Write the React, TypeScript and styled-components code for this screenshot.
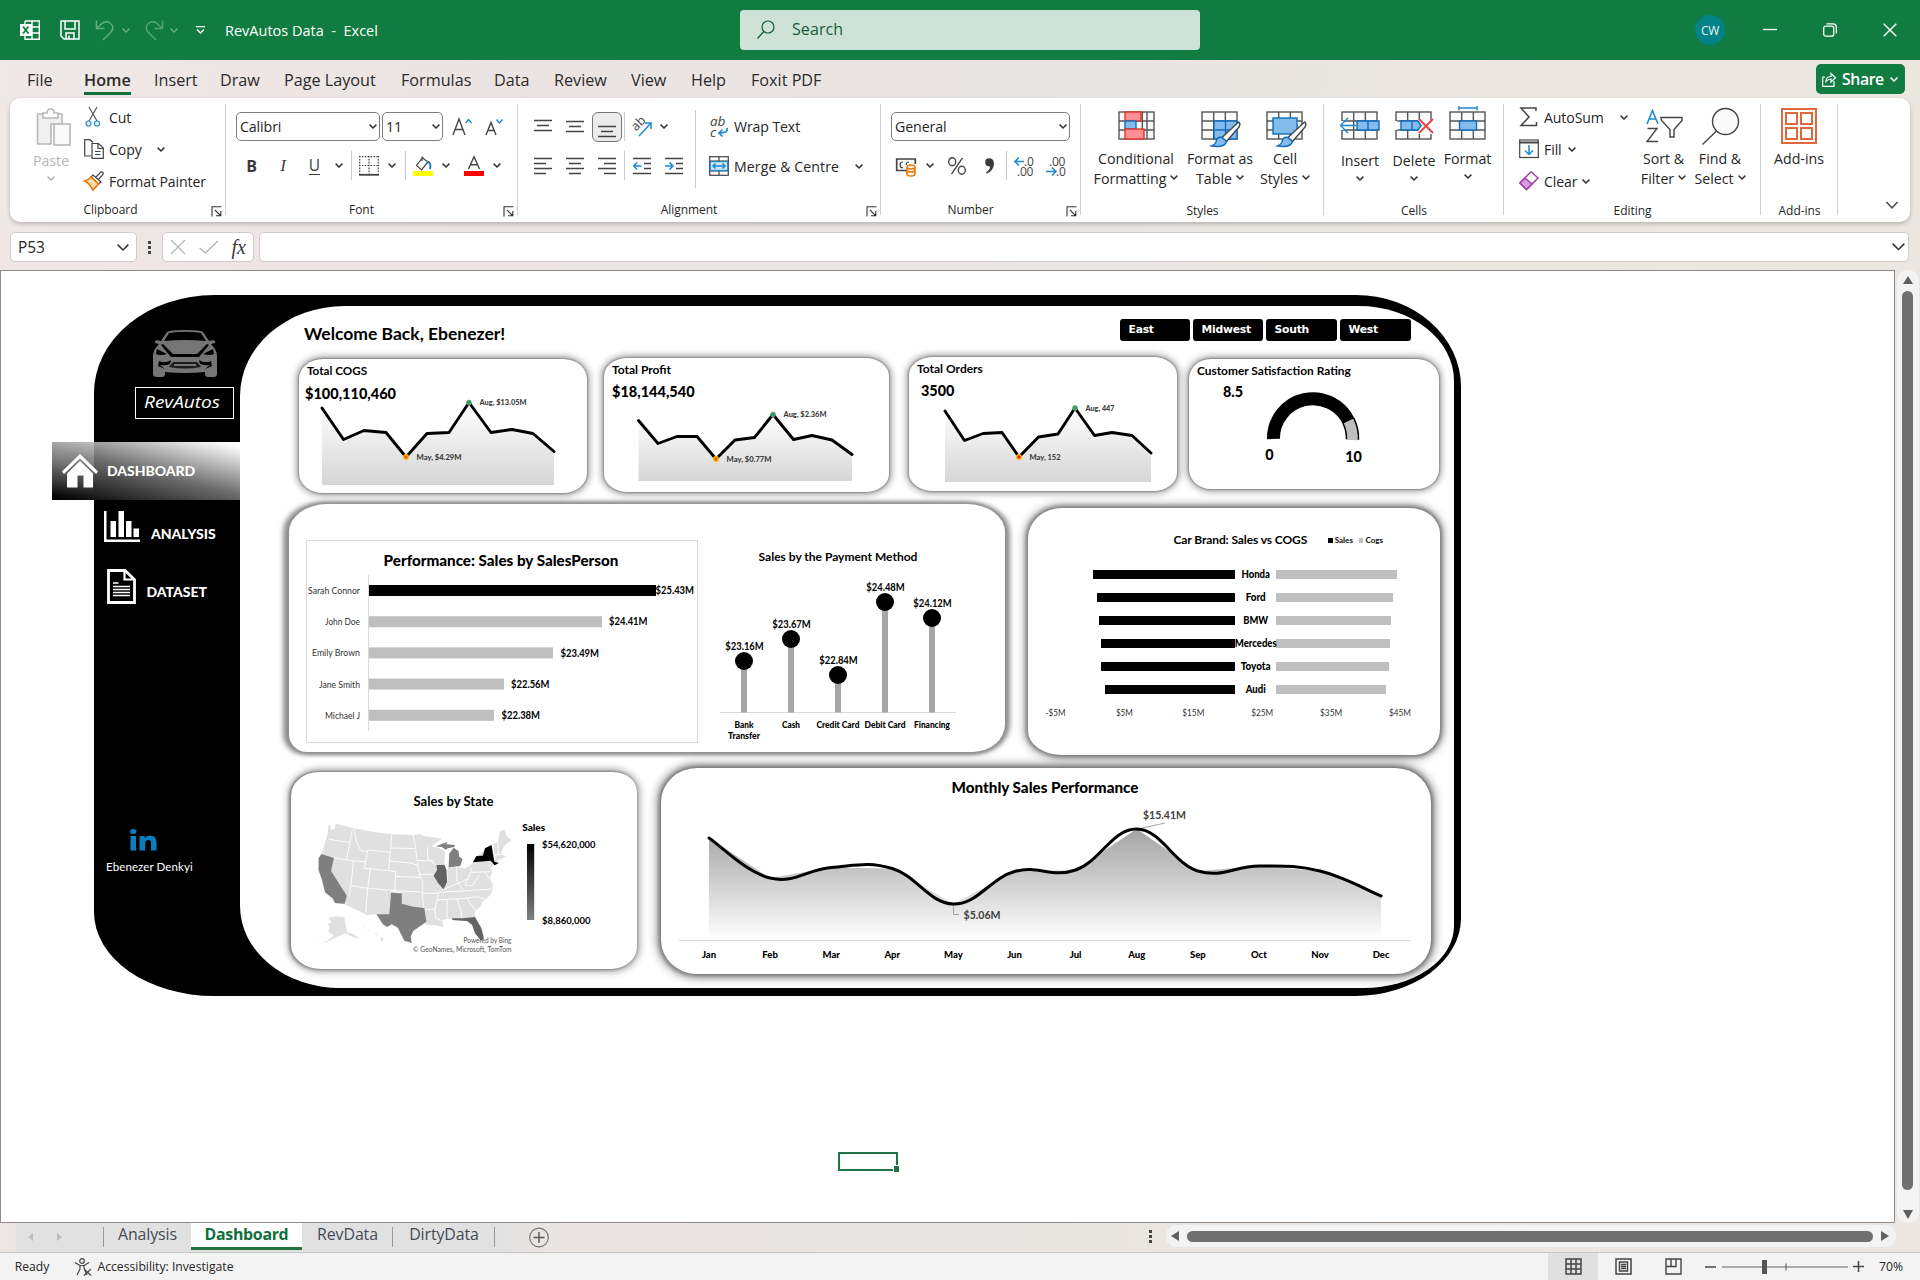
import React from 'react';
import styled, { createGlobalStyle } from 'styled-components';

const UI = `"Open Sans", "Noto Sans", sans-serif`;
const CAL = `Lato, "Open Sans", sans-serif`;

const Global = createGlobalStyle`
  * { box-sizing: border-box; }
  html, body { margin: 0; padding: 0; }
  body { width: 1920px; height: 1280px; overflow: hidden; background: #ebe6e2; font-family: ${UI}; color: #262626; }
  svg { display: block; overflow: visible; flex: none; }
`;

/* ---------- shell ---------- */
const Shell = styled.div`
  width: 1920px; height: 1280px; display: flex; flex-direction: column; overflow: hidden;
  background: linear-gradient(100deg, #efe8e6 0%, #ebe4e2 25%, #e9e5e3 50%, #ece7e0 80%, #ebe6e1 100%);
`;
const TitleBar = styled.header`
  height: 60px; background: #107c41; color: #fff; display: flex; align-items: center; flex: none;
`;
const Slot = styled.div<{ $w: number; $pl?: number }>`
  width: ${p => p.$w}px; flex: none; display: flex; align-items: center; justify-content: center; padding-left: ${p => p.$pl ?? 0}px;
`;
const DocName = styled.div`
  width: 517px; flex: none; padding-left: 2px; font-size: 14.5px; white-space: pre;
`;
const SearchBox = styled.div`
  width: 460px; flex: none; height: 40px; background: #cfe2d8; border-radius: 4px; display: flex; align-items: center;
  padding-left: 17px; gap: 17px; color: #185c37; font-size: 16px; letter-spacing: 0.1px; padding-bottom: 2px;
`;
const Avatar = styled.div`
  width: 30px; flex: none; height: 30px; border-radius: 50%; background: #038387; font-size: 12px; letter-spacing: -0.4px;
  display: flex; align-items: center; justify-content: center; margin: 0 8px 0 495px; color: #e8f6f6;
`;
const MenuBar = styled.nav`
  height: 38px; display: flex; flex: none; padding-left: 27px; align-items: flex-start; font-size: 16.2px; color: #2b2b2b;
`;
const MenuItem = styled.div<{ $w: number; $on?: boolean }>`
  width: ${p => p.$w}px; flex: none; height: 36px; line-height: 40px; white-space: nowrap;
  font-weight: ${p => (p.$on ? 600 : 400)};
  span { display: inline-block; height: 35px; border-bottom: ${p => (p.$on ? '3px solid #0f703b' : '0')}; }
`;
const ShareButton = styled.div`
  width: 89px; height: 30px; margin: 4px 15px 0 auto; border-radius: 5px; background: #107c41; color: #fff;
  display: flex; align-items: center; font-size: 15.8px; font-weight: 600; letter-spacing: -0.4px; padding: 0 5px 0 6px; gap: 6px;
`;
const Ribbon = styled.section`
  height: 124px; margin: 0 10px; border-radius: 10px; background: #fff; display: flex; flex: none;
  box-shadow: 0 2px 4px rgba(0,0,0,.22);
`;
const Group = styled.div<{ $w: number }>`
  width: ${p => p.$w}px; flex: none; display: flex; flex-direction: column;
  background: linear-gradient(#d1d1d1, #d1d1d1) no-repeat right 6px / 1px 111px;
`;
const GroupBody = styled.div<{ $pl?: number }>`
  height: 102px; display: flex; padding-left: ${p => p.$pl ?? 0}px;
`;
const GroupFoot = styled.div<{ $dy?: number; $pr?: number }>`
  height: 19px; display: flex; align-items: center; justify-content: center; font-size: 12px; letter-spacing: -0.05px;
  color: #262626; padding-top: ${p => p.$dy ?? 0}px;
  & > span { flex: 1; text-align: center; padding-right: ${p => p.$pr ?? 0}px; }
  & > svg { margin: 0 4px 0 -3px; position: relative; top: 2px; }
`;
const Stack = styled.div<{ $w?: number; $pt: number; $ml?: number; $gap?: number }>`
  ${p => (p.$w ? `width:${p.$w}px;` : '')} flex: none; display: flex; flex-direction: column; padding-top: ${p => p.$pt}px;
  margin-left: ${p => p.$ml ?? 0}px; gap: ${p => p.$gap ?? 0}px;
`;
const Tools = styled.div`
  height: 29px; display: flex; align-items: center;
`;
const Command = styled.div<{ $h?: number; $gap?: number }>`
  height: ${p => p.$h ?? 32}px; display: flex; align-items: center; font-size: 14.1px; white-space: nowrap; letter-spacing: -0.1px;
  & > i { width: 27px; display: flex; padding-left: 2px; }
  & > svg { margin-left: ${p => p.$gap ?? 9}px; }
`;
const BigCommand = styled.div<{ $w: number; $dim?: boolean; $low?: boolean }>`
  width: ${p => p.$w}px; flex: none; display: flex; flex-direction: column; align-items: center; padding-top: 8px;
  font-size: 14.2px; line-height: 20px; text-align: center; white-space: nowrap; color: ${p => (p.$dim ? '#b5b5b5' : '#262626')};
  & > svg { margin-bottom: ${p => (p.$low ? 2 : 0)}px; }
  & > div + svg { margin-top: 5px; }
  & > div { display: flex; align-items: center; justify-content: center; gap: 4px; height: 20px; }
  & > div > svg { margin-bottom: 4px; }
`;
const Combo = styled.div<{ $w: number }>`
  width: ${p => p.$w}px; height: 29px; border: 1px solid #7d7d7d; border-radius: 5px; display: flex; align-items: center;
  justify-content: space-between; padding: 0 2px 0 3px; font-size: 14.2px; margin-right: 2px; letter-spacing: -0.1px;
`;
const Pressed = styled.div`
  width: 30px; height: 30px; border: 1px solid #767676; border-radius: 6px; background: #ebebeb; margin-left: 1px;
  display: flex; align-items: center; justify-content: center; padding-top: 10px;
`;
const Rule = styled.div<{ $h: number }>`
  width: 1px; height: ${p => p.$h}px; background: #c8c8c8;
`;
const Glyph = styled.span<{ $s?: number; $b?: boolean; $f?: string; $i?: boolean; $u?: boolean }>`
  font-size: ${p => p.$s ?? 17}px; font-weight: ${p => (p.$b ? 700 : 400)}; font-family: ${p => p.$f ?? UI};
  font-style: ${p => (p.$i ? 'italic' : 'normal')}; line-height: 20px; color: #3b3b3b;
  ${p => (p.$u ? 'border-bottom: 1px solid #3b3b3b; line-height: 17px;' : '')}
`;
const FormulaRow = styled.div`
  height: 48px; flex: none; display: flex; padding: 10px 11px 8px 10px;
`;
const Field = styled.div<{ $w: number; $mr?: number; $pr?: number }>`
  width: ${p => p.$w}px; height: 30px; background: #fff; border: 1px solid #cfcccb; border-radius: 5px; margin-right: ${p => p.$mr ?? 0}px;
  display: flex; align-items: center; justify-content: space-between; padding: 0 ${p => p.$pr ?? 7}px 0 7px; font-size: 15.4px;
`;
const Dots = styled.div<{ $mt?: number }>`
  width: 3px; display: flex; flex-direction: column; gap: 2px; margin-top: ${p => p.$mt ?? 0}px;
  i { width: 3px; height: 3px; background: #444; }
`;

/* ---------- worksheet ---------- */
const Work = styled.div`
  height: 953px; flex: none; display: flex;
`;
const Sheet = styled.main`
  width: 1894.5px; border: 1px solid #8f8b89; background: #fff; position: relative; padding: 24px 0 0 93px;
`;
const VScroll = styled.div`
  width: 22px; margin-left: 2px; background: #f3f3f3; border-radius: 10px; display: flex; flex-direction: column; align-items: center;
  padding-top: 6px;
`;
const Thumb = styled.div`
  width: 11px; height: 899px; border-radius: 6px; background: #707070; margin: 7px 0 20px;
`;
const Selection = styled.div`
  position: absolute; left: 837px; top: 881px; width: 60px; height: 19px; border: 2px solid #217346;
  &::after { content: ''; position: absolute; right: -3px; bottom: -3px; width: 5px; height: 6px; background: #217346; border: solid #fff; border-width: 1px 0 0 1px; }
`;
const Board = styled.div`
  width: 1367px; height: 701px; background: #000; display: flex;
  border-radius: 120px 105px 106px 120px / 98px 92px 78px 84px;
`;
const Side = styled.aside`
  width: 146px; display: flex; flex-direction: column; color: #fff; font-family: ${CAL};
`;
const LogoBox = styled.div`
  width: 99px; height: 32px; border: 1.4px solid #fff; margin: 10px 0 23px 41px; display: flex; align-items: center; padding-left: 8px;
`;
const NavItem = styled.div<{ $h: number; $pl: number; $gap: number; $on?: boolean; $dy: number }>`
  height: ${p => p.$h}px; display: flex; align-items: center; padding-left: ${p => p.$pl}px; gap: ${p => p.$gap}px;
  font-size: 14px; font-weight: 900; white-space: nowrap; letter-spacing: -0.05px;
  ${p => p.$on && `margin-left: -42px; background: linear-gradient(to bottom, rgba(255,255,255,.32), transparent 92%) no-repeat 0 0 / 42px 100%, linear-gradient(14deg, #000 2%, #6e6e6e 50%, #fff 96%);`}
  span { position: relative; top: ${p => p.$dy}px; }
`;
const Owner = styled.div`
  margin-top: auto; padding: 0 0 119px 12px; font-size: 11.5px; line-height: 20px; white-space: nowrap; letter-spacing: .1px;
  svg { margin: 0 0 6px 24px; }
`;
const Content = styled.div`
  width: 1214px; height: 682px; margin-top: 11px; background: #fff; display: flex; flex-direction: column; font-family: ${CAL}; color: #000;
  border-radius: 105px 95px 90px 100px / 90px 75px 62px 82px;
`;
const TopLine = styled.div`
  height: 51px; display: flex; padding: 13px 43px 0 64px; justify-content: space-between; flex: none;
`;
const Welcome = styled.h1`
  margin: 5px 0 0; font-size: 17.5px; line-height: 20px; font-weight: 700;
`;
const Slicers = styled.div`
  display: flex; gap: 3px;
`;
const Slicer = styled.div<{ $w: number }>`
  width: ${p => p.$w}px; height: 22px; background: #000; border-radius: 3px; color: #fff; font: 700 10.8px/21px "DejaVu Sans", sans-serif;
  letter-spacing: -0.25px; padding-left: 8.5px;
`;
const CardRow = styled.div<{ $h: number; $pl: number }>`
  height: ${p => p.$h}px; display: flex; flex: none; padding-left: ${p => p.$pl}px; align-items: flex-start;
`;
const Card = styled.section<{ $w: number; $h: number; $ml?: number; $mt?: number; $r: string; $deep?: string }>`
  width: ${p => p.$w}px; height: ${p => p.$h}px; margin: ${p => p.$mt ?? 0}px 0 0 ${p => p.$ml ?? 0}px; flex: none; background: #fff;
  border-radius: ${p => p.$r}; display: flex; flex-direction: column;
  box-shadow: ${p => p.$deep ?? '0 0 2px 1px rgba(0,0,0,.28), 0 0 6px 3px rgba(0,0,0,.33)'};
`;
const Line = styled.div<{ $h: number; $pl?: number; $s: number; $ls?: number; $c?: boolean; $pr?: number; $w?: number; $pt?: number }>`
  height: ${p => p.$h}px; line-height: ${p => p.$h - (p.$pt ?? 0)}px; padding: ${p => p.$pt ?? 0}px ${p => p.$pr ?? 0}px 0 ${p => p.$pl ?? 0}px; font-size: ${p => p.$s}px;
  font-weight: ${p => p.$w ?? 700}; letter-spacing: ${p => p.$ls ?? 0}px; white-space: nowrap; text-align: ${p => (p.$c ? 'center' : 'left')}; flex: none;
`;
const Split = styled.div`
  display: flex;
`;
const PerfBox = styled.div`
  width: 392px; height: 203px; margin: 36px 0 0 17px; border: 1px solid #d9d9d9;
`;
const PayBox = styled.div`
  width: 280px; margin-top: 36px;
`;
const Legend = styled.div`
  display: flex; align-items: center; font-size: 8px; font-weight: 900; margin-left: 21px; gap: 2px; color: #222;
  i { width: 4.5px; height: 5px; background: #000; }
  i + span + i { background: #bfbfbf; margin-left: 4px; }
`;

/* ---------- bottom ---------- */
const TabBar = styled.div`
  height: 29px; display: flex; flex: none;
`;
const TabStrip = styled.div`
  width: 545px; height: 29px; margin-left: 16px; display: flex; background: linear-gradient(90deg, #e2e1e1 0 480px, #ebe6e4 545px);
`;
const Tab = styled.div<{ $w: number; $on?: boolean; $bar?: boolean }>`
  width: ${p => p.$w}px; height: 27px; font-size: 15.9px; line-height: 22px; text-align: center; color: ${p => (p.$on ? '#0f703b' : '#444b55')};
  font-weight: ${p => (p.$on ? 700 : 400)}; letter-spacing: ${p => (p.$on ? -0.3 : -0.1)}px; flex: none;
  ${p => (p.$on ? 'background:#fff; border-bottom: 3px solid #217346;' : '')}
  ${p => (p.$bar ? 'background: linear-gradient(#999,#999) no-repeat right 4px / 1px 20px;' : '')}
`;
const HScroll = styled.div`
  width: 731px; height: 22px; margin: 2px 24px 0 14px; background: #f3f3f3; border-radius: 10px; display: flex; align-items: center; justify-content: space-between; padding: 0 7px 0 5px;
  i { width: 686px; height: 11px; border-radius: 6px; background: #707070; }
`;
const Status = styled.footer`
  height: 28px; background: #f3f3f3; border-top: 1px solid #c9c5c3; display: flex; align-items: center; font-size: 12.2px; flex: none; padding-left: 14px;
`;
const ViewBtn = styled.div<{ $on?: boolean; $w: number }>`
  width: ${p => p.$w}px; height: 27px; display: flex; align-items: center; justify-content: center; background: ${p => (p.$on ? '#e0e0e0' : 'transparent')};
`;

/* ---------- icons ---------- */
const Chev = ({ w = 8, c = '#333', s = 1.5 }: { w?: number; c?: string; s?: number }) => (
  <svg width={w} height={w / 2 + 1} viewBox={`0 0 ${w} ${w / 2 + 1}`}>
    <path d={`M.6 .6 L${w / 2} ${w / 2} L${w - 0.6} .6`} fill="none" stroke={c} strokeWidth={s} />
  </svg>
);
const Launcher = () => (
  <svg width="11" height="11" viewBox="0 0 11 11" fill="none" stroke="#333" strokeWidth="1.1">
    <path d="M1 10.500V.8H10.500M3.800 3.800L9.500 9.500M9.800 5V9.800H5" />
  </svg>
);
type IcoProps = { w?: number; h?: number; c?: string; sw?: number; children: React.ReactNode };
const Ico = ({ w = 20, h = 20, c = '#444', sw = 1.2, children }: IcoProps) => (
  <svg width={w} height={h} viewBox={`0 0 ${w} ${h}`} fill="none" stroke={c} strokeWidth={sw}>{children}</svg>
);
const B = '#1e88d2';
const Grid3 = ({ x = 4, y = 6, w = 36, h = 28 }) => (
  <>
    <rect x={x} y={y} width={w} height={h} fill="#fafafa" />
    <path d={`M${x} ${y + h / 3}h${w}M${x} ${y + (2 * h) / 3}h${w}M${x + w / 3} ${y}v${h}M${x + (2 * w) / 3} ${y}v${h}`} />
  </>
);
const Brush = ({ x }: { x: number }) => (
  <g transform={`translate(${x} 0)`}>
    <path d="M40.500 16Q43 17 41 21L28.500 35.500L24 31.500Z" fill="#fff" stroke="#444" />
    <path d="M24 31.500L28.500 35.500Q27 42 13.500 40Q18 38 18.500 34Q20 30.500 24 31.500Z" fill="#83bbec" stroke="#0f6cbd" />
  </g>
);
const PasteIcon = () => (
  <Ico w={44} h={43} c="#b8b8b8" sw={1.6}>
    <path d="M10 8H33V18H22V38H8.500V8Z" fill="#f0f0f0" />
    <path d="M14 12V7H18Q18 3 21.500 3T25 7H29V12Z" fill="#fff" />
    <rect x="25" y="18" width="16" height="21" fill="#fafafa" />
  </Ico>
);
const House = () => (
  <svg width="36" height="34" viewBox="0 0 36 34" fill="#fff">
    <path d="M0 17.500L18 0L36 17.500L34 20L18 4.500L2 20Z" />
    <path d="M18 7L31 19.500V33.500H21.500V21.500H15.500V33.500H5V19.500Z" />
  </svg>
);
const BarsIcon = () => (
  <svg width="36" height="31" viewBox="0 0 36 31" fill="#fff">
    <path d="M0 0H2.500V28.500H36V31H0ZM6.500 10H12V26H6.500ZM14.500 0H20V26H14.500ZM22 10H27.500V26H22ZM29.500 17.500H35V26H29.500Z" />
  </svg>
);
const DocIcon = () => (
  <svg width="29" height="35" viewBox="0 0 29 35" fill="none" stroke="#fff">
    <path d="M1.500 1.500H18L27.500 10.500V33.500H1.500Z" strokeWidth="2.800" />
    <path d="M17.500 2V10.500H27" strokeWidth="2.200" />
    <path d="M6 14H11.500M6 17.600H23M6 20.600H23M6 23.600H23M6 26.600H23" strokeWidth="1.500" />
  </svg>
);
const Car = () => (
  <svg width="64" height="47" viewBox="0 0 64 47">
    <path fill="#757575" d="M14 2Q16 0 32 0T50 2L56 11Q63 9 62 13L58 14Q64 20 64 26V44Q64 47 60 47H55Q52 47 52 44V42Q32 44 12 42V44Q12 47 9 47H4Q0 47 0 44V26Q0 20 6 14L2 13Q1 9 8 11Z" />
    <g fill="#000">
      <path d="M16 3Q32 .5 48 3L53 11Q32 9 11 11Z" />
      <path d="M10 14L20 24H44L54 14L56 15L46 27H18L8 15Z" />
      <path d="M4 19L14 24Q7 26 3 24ZM60 19L50 24Q57 26 61 24Z" />
      <path d="M6 31Q12 34 18 30L17 34Q12 36 7 35L12 39L5 36ZM58 31Q52 34 46 30L47 34Q52 36 57 35L52 39L59 36Z" />
      <path d="M20 32H44L48 37Q32 40 16 37Z" opacity=".75" />
    </g>
    <path d="M21 35H43" stroke="#757575" strokeWidth="2" />
  </svg>
);

/* ---------- charts ---------- */
type TxProps = { x: number; y: number; w?: number; s: number; a?: 'start' | 'middle' | 'end'; b?: number; c?: string; children: string };
const Tx = ({ x, y, w, s, a = 'middle', b = 700, c = '#000', children }: TxProps) => (
  <text x={x} y={y + s * 0.33} fontSize={s} textAnchor={a} fontWeight={b} fill={c} fontFamily={CAL}
    textLength={w} lengthAdjust="spacingAndGlyphs">{children}</text>
);
type SparkProps = { id: string; box: string; w: number; h: number; pts: number[][]; base: number; hi: string; lo: string; hw: number; lw: number; red?: string };
const Spark = ({ id, box, w, h, pts, base, hi, lo, hw, lw, red = '#d9602a' }: SparkProps) => {
  const d = pts.map(p => p.join(' ')).join('L');
  const [m, a] = [pts[4], pts[7]];
  return (
    <svg width={w} height={h} viewBox={box}>
      <defs><linearGradient id={id} x1="0" y1="0" x2="0" y2="1"><stop offset="0" stopColor="#fff" /><stop offset="1" stopColor="#d6d6d6" /></linearGradient></defs>
      <path d={`M${d}V${base}H${pts[0][0]}Z`} fill={`url(#${id})`} />
      <path d={`M${d}`} fill="none" stroke="#000" strokeWidth="2.900" strokeLinecap="round" strokeLinejoin="round" />
      <circle cx={m[0]} cy={m[1]} r="2.400" fill={red} stroke="#ffc000" strokeWidth="1.300" />
      <circle cx={a[0]} cy={a[1]} r="2.500" fill="#1fa85a" stroke="#8b9a90" strokeWidth=".7" />
      <Tx x={a[0] + 10.500} y={a[1] + 0.3} w={hw} s={7.8} a="start" b={900} c="#404040">{hi}</Tx>
      <Tx x={m[0] + 10.500} y={m[1] + 0.8} w={lw} s={7.8} a="start" b={900} c="#404040">{lo}</Tx>
    </svg>
  );
};
const people: [string, number, string, number, number][] = [
  ['Sarah Connor', 656, '$25.43M', 655.500, 52], ['John Doe', 602, '$24.41M', 609, 35], ['Emily Brown', 553, '$23.49M', 560.500, 48],
  ['Jane Smith', 504, '$22.56M', 511, 41], ['Michael J', 494, '$22.38M', 501.500, 35],
];
const pays: [string, number, string, number][] = [
  ['Bank', 661, '$23.16M', 19], ['Cash', 639, '$23.67M', 18], ['Credit Card', 675, '$22.84M', 43], ['Debit Card', 602, '$24.48M', 41], ['Financing', 618, '$24.12M', 36],
];
const brands: [string, number, number, number][] = [
  ['Honda', 1093, 1397, 28.500], ['Ford', 1097, 1393, 20], ['BMW', 1099, 1391, 25], ['Mercedes', 1101, 1390, 42], ['Toyota', 1101, 1389, 30], ['Audi', 1105, 1386, 20],
];
const months = ['Jan', 'Feb', 'Mar', 'Apr', 'May', 'Jun', 'Jul', 'Aug', 'Sep', 'Oct', 'Nov', 'Dec'];
const monthY = [838, 878, 867.500, 868.500, 904, 871.500, 870, 829, 871, 866, 871, 896];
const mx = (i: number) => 709 + i * 61.1;
const smooth = () => {
  const P = monthY.map((y, i) => [mx(i), y]);
  let d = `M${P[0]}`;
  for (let i = 0; i < P.length - 1; i++) {
    const a = P[i - 1] || P[i], b = P[i], c = P[i + 1], e = P[i + 2] || c, k = 5;
    d += `C${b[0] + (c[0] - a[0]) / k} ${b[1] + (c[1] - a[1]) / k} ${c[0] - (e[0] - b[0]) / k} ${c[1] - (e[1] - b[1]) / k} ${c[0]} ${c[1]}`;
  }
  return d;
};
const Monthly = () => (
  <svg width="770" height="160" viewBox="661 803 770 160">
    <defs><linearGradient id="mg" x1="0" y1="0" x2="0" y2="1"><stop offset="0" stopColor="#a3a3a3" /><stop offset="1" stopColor="#fff" /></linearGradient></defs>
    <path d={`M${monthY.map((y, i) => `${mx(i)} ${y}`).join('L')}V940H709Z`} fill="url(#mg)" />
    <path d="M679 940.500H1411" stroke="#d9d9d9" />
    <path d="M1138 829L1165 823M953.500 904V914.500H959" stroke="#a6a6a6" fill="none" />
    <path d={smooth()} fill="none" stroke="#000" strokeWidth="3" strokeLinecap="round" />
    <Tx x={1164.500} y={815} w={43} s={11.200} c="#404040">$15.41M</Tx>
    <Tx x={982} y={915} w={37} s={11.200} c="#404040">$5.06M</Tx>
    {months.map((m, i) => <Tx key={m} x={mx(i)} y={954.500} s={9.500} b={900}>{m}</Tx>)}
  </svg>
);
const MapChart = () => (
  <svg width="346" height="155" viewBox="291 813 346 155">
    <defs><linearGradient id="sc" x1="0" y1="0" x2="0" y2="1"><stop offset="0" stopColor="#000" /><stop offset="1" stopColor="#808080" /></linearGradient></defs>
    <g transform="translate(90 755) scale(.35714 .33333)">
      <path fill="#e0e0e0" d="M668 209L674 214 676 226 687 220 687 206 740 220 790 230 845 238 905 240 926 237 932 242 986 251 966 266 956 274 975 278 988 284 994 292 992 330 998 345 1003 337 1030 335 1048 341 1062 334 1075 322 1084 304 1124 270 1128 267 1142 262 1148 228 1160 224 1168 245 1181 256 1160 272 1152 290 1154 300 1166 304 1150 312 1133 322 1122 340 1127 352 1120 366 1126 385 1128 402 1126 412 1112 430 1098 440 1095 452 1078 470 1078 488 1045 490 1013 490 998 492 986 497 990 517 968 510 942 509 936 500 860 500 802 478 775 480 765 474 712 448 686 444 658 412 640 345 642 310 650 290 665 240Z" />
      <path fill="#e0e0e0" d="M668 489L690 484 712 486 720 532 738 537 752 549 742 550 715 535 690 547 662 562 635 568 660 560 682 543 667 528 672 516 665 508 676 503Z M764 516L770 520 764 520ZM778 524L786 527 780 529ZM796 534L806 538 800 540ZM812 545L824 552 816 560Z" />
      <path fill="none" stroke="#fff" strokeWidth="2.600" d="M668 252L690 257 728 262M648 297L683 308 738 318 770 320M735 222L728 262 718 313M740 222L746 260 758 287 778 290M842 292L778 285 768 340 836 347 845 238M842 279L910 281M905 240L912 281 916 316 920 345 925 367M840 318L898 324 916 330M738 318L730 392 725 425M785 342L778 398 772 475M730 392L780 400 853 407M836 347L856 350 853 407 930 411 934 459M856 364L925 367M916 316L962 318M920 358L962 358M925 367L932 380 932 415 976 415M937 463L966 463M968 330L946 310 945 276M976 415L966 463 968 490 985 497M976 434L972 434M1000 432L1000 490M1028 432L1040 470 1040 488M976 412L1045 408 1126 402M972 435L1050 430 1085 425 1110 435M1055 430L1080 467M1000 337L1000 378 988 404 1030 385 1058 372 1067 350 1067 335M1026 335L1028 380 1045 405M1068 352L1120 350M1058 372L1050 390 1070 392 1090 362M1126 322L1118 335M1128 270L1134 315M1142 262L1144 300M1134 300L1154 298M843 410L873 413M1105 352L1124 378" />
      <path fill="#7f7f7f" d="M648 297L683 308 675 348 719 422 713 446 686 444 680 430 658 412 650 375 640 345 640 310ZM843 413L873 415 873 446 905 455 936 459 942 500 905 528 898 545 901 564 880 557 862 518 845 508 832 516 820 508 802 478 838 478ZM968 274L1000 261 998 268 1022 270 1020 276 1002 280 996 284 985 276ZM1018 278L1032 288 1034 305 1043 312 1037 333 1004 337 1006 296Z" />
      <path fill="#636363" d="M970 330L993 330 998 345 1000 380 990 403 975 385 962 362 972 345ZM1013 490L1045 490 1078 486 1096 520 1103 550 1095 557 1078 535 1070 510 1056 498 1040 497 1015 495Z" />
      <path fill="#000" d="M1072 322L1082 303 1100 302 1106 280 1124 270 1132 320 1145 324 1133 331 1122 317Z" />
    </g>
    <Tx x={533.700} y={827.500} w={23} s={9.500} b={900}>Sales</Tx>
    <rect x="527" y="844" width="7.200" height="76" fill="url(#sc)" />
    <Tx x={542} y={844.500} w={53.500} s={10} a="start">$54,620,000</Tx>
    <Tx x={542} y={920.500} w={48.500} s={10} a="start">$8,860,000</Tx>
    <Tx x={511.500} y={940.500} w={48} s={7} a="end" b={400} c="#555">Powered by Bing</Tx>
    <Tx x={511.500} y={949.500} w={98.500} s={7} a="end" b={400} c="#555">© GeoNames, Microsoft, TomTom</Tx>
  </svg>
);

const menu: [string, number][] = [
  ['File', 57], ['Home', 70], ['Insert', 66], ['Draw', 64], ['Page Layout', 117], ['Formulas', 93], ['Data', 60], ['Review', 77], ['View', 60], ['Help', 60], ['Foxit PDF', 90],
];

export default function App() {
  return (
    <Shell>
      <Global />
      <TitleBar>
        <Slot $w={60}>
          <Ico c="#fff" sw={1.4}>
            <path d="M5 1H19.300V19.300H5V16M5 1V4M12 1V19.300M12 7H19M12 13H19" />
            <rect x="0" y="4" width="12" height="12" fill="#fff" stroke="none" /><path d="M3 6.500L8.500 13.500M8.500 6.500L3 13.500" stroke="#107c41" strokeWidth="1.800" />
          </Ico>
        </Slot>
        <Slot $w={20}><Ico c="#fff" sw={1.5}><path d="M1 1H19V19H4L1 16ZM5 1V9H15V1M6 19V13H14V19M9 19V15.500" /></Ico></Slot>
        <Slot $w={42} $pl={8}><Ico c="#5fae7f" sw={1.5}><path d="M1.500 .5V8.500H9.500M1.500 8.500L7 3.500Q11 0 15 3Q20 7 16 12L8 20" /></Ico></Slot>
        <Chev w={8} c="#5fae7f" />
        <Slot $w={40} $pl={7}><Ico c="#4fa575" sw={1.5}><path d="M18.500 .5V8.500H10.500M18.500 8.500L13 3.500Q9 0 5 3Q0 7 4 12L12 20" /></Ico></Slot>
        <Chev w={8} c="#5fae7f" />
        <Slot $w={45}><Ico w={9} h={8} c="#fff" sw={1.3}><path d="M0 .7H9M1 3.500L4.500 7L8 3.500" /></Ico></Slot>
        <DocName>RevAutos Data  -  Excel</DocName>
        <SearchBox>
          <Ico w={18} h={19} c="#185c37"><circle cx="11" cy="7" r="6" /><path d="M6.800 11.500L.5 18.500" /></Ico>
          Search
        </SearchBox>
        <Avatar>CW</Avatar>
        <Slot $w={74}><Ico w={14} h={14} c="#fff" sw={1.3}><path d="M0 6.500H14" /></Ico></Slot>
        <Slot $w={46}><Ico w={14} h={14} c="#fff" sw={1.3}><rect x=".7" y="3.200" width="10" height="10" rx="2" /><path d="M3.500 .8H10Q13.300 .8 13.300 4V10.500" /></Ico></Slot>
        <Slot $w={67} $pl={7}><Ico w={14} h={14} c="#fff" sw={1.4}><path d="M.7 .7L13.300 13.300M13.300 .7L.7 13.300" /></Ico></Slot>
      </TitleBar>

      <MenuBar>
        {menu.map(([t, w]) => <MenuItem key={t} $w={w} $on={t === 'Home'}><span>{t}</span></MenuItem>)}
        <ShareButton>
          <Ico w={14} h={15} c="#fff" sw={1.2}><path d="M3 5H.7V14.300H12V9M4 9.500Q4 4.500 9 4.500V1.500L13.500 5.800L9 10V7Q6 7 4 9.500Z" /></Ico>
          Share <Chev c="#fff" w={8} />
        </ShareButton>
      </MenuBar>

      <Ribbon>
        <Group $w={216}>
          <GroupBody $pl={18}>
            <BigCommand $w={46} $dim $low><PasteIcon /><div>Paste</div><Chev c="#b5b5b5" /></BigCommand>
            <Stack $pt={3} $ml={8}>
              <Command><i><Ico><path d="M5 0L13 14M13 0L5 14" stroke="#555" /><circle cx="4.500" cy="16.500" r="2.500" stroke={B} /><circle cx="13" cy="16.500" r="2.500" stroke={B} /></Ico></i>Cut</Command>
              <Command $gap={15}><i><Ico><path d="M7 17H.7V.7H6L9 3.500" fill="#fafafa" /><path d="M8 4.500H14.500L19.300 9V19.300H8ZM14 4.500V9.500H19M11 12.500H16.500M11 15.500H16.500" /></Ico></i>Copy<Chev /></Command>
              <Command><i><Ico><path d="M12 6L17 .8Q20 1 19 3.500L14.500 8.500M9 4L17 11L14.500 13L7 6Z" fill="#fff" /><path d="M7 6L14.500 13L9 19Q5 12 .8 10Q4 9.500 7 6Z" fill="#ffdcae" stroke="#e8750a" strokeWidth="1.600" /></Ico></i>Format Painter</Command>
            </Stack>
          </GroupBody>
          <GroupFoot $pr={3}><span>Clipboard</span><Launcher /></GroupFoot>
        </Group>

        <Group $w={292}>
          <GroupBody $pl={10}>
            <Stack $pt={14} $gap={10}>
              <Tools>
                <Combo $w={144}>Calibri<Chev /></Combo>
                <Combo $w={61}>11<Chev /></Combo>
                <Slot $w={34}><Ico w={20} h={20} sw={1.4}><path d="M1 18L7 2L13 18M3.200 12.500H10.800" /><path d="M13.500 6L16.500 2.500L19.500 6" stroke={B} /></Ico></Slot>
                <Slot $w={30}><Ico w={18} h={20} sw={1.4}><path d="M1 18L6 5.500L11 18M2.800 13.500H9.200" /><path d="M11.500 2.500L14.500 6L17.500 2.500" stroke={B} /></Ico></Slot>
              </Tools>
              <Tools>
                <Slot $w={31}><Glyph $b $s={16}>B</Glyph></Slot>
                <Slot $w={32}><Glyph $i $s={17} $f={'"Liberation Serif", serif'}>I</Glyph></Slot>
                <Slot $w={31}><Glyph $u $s={15.5}>U</Glyph></Slot>
                <Slot $w={17}><Chev /></Slot>
                <Slot $w={8}><Rule $h={29} /></Slot>
                <Slot $w={27}><Ico w={20} h={20}><path d="M.7 0V18M10 0V18M19.300 0V18M0 .7H20M0 9.500H20" strokeDasharray="1.600 1.300" /><path d="M0 18.800H20" strokeWidth="1.800" /></Ico></Slot>
                <Slot $w={19}><Chev /></Slot>
                <Slot $w={8}><Rule $h={29} /></Slot>
                <Slot $w={28}><Ico w={20} h={20}><path d="M10 1L3.500 9.500L8.500 14L15 6L9 1.500V5" /><path d="M14.500 5.500Q18.500 7 17 13" stroke={B} strokeWidth="2" /><rect x="0" y="15" width="20" height="5" fill="#ff0" stroke="none" /></Ico></Slot>
                <Slot $w={18}><Chev /></Slot>
                <Slot $w={38}><Ico w={20} h={20} sw={1.4}><path d="M4.500 13L10 .8L15.500 13M6.500 8.800H13.500" /><rect x="0" y="15" width="20" height="5" fill="red" stroke="none" /></Ico></Slot>
                <Slot $w={7}><Chev /></Slot>
              </Tools>
            </Stack>
          </GroupBody>
          <GroupFoot $pr={9}><span>Font</span><Launcher /></GroupFoot>
        </Group>

        <Group $w={363}>
          <GroupBody $pl={9}>
            <Stack $pt={14} $gap={10} $w={164}>
              <Tools>
                <Slot $w={32}><Ico w={18} h={21} sw={1.4}><path d="M0 4.500H18M3 9.500H15M0 14.500H18" /></Ico></Slot>
                <Slot $w={32}><Ico w={18} h={13} sw={1.4}><path d="M0 1.500H18M3 6.500H15M0 11.500H18" /></Ico></Slot>
                <Pressed><Ico w={18} h={13} sw={1.4}><path d="M0 1.500H18M3 6.500H15M0 11.500H18" /></Ico></Pressed>
                <Slot $w={5}><Rule $h={29} /></Slot>
                <Slot $w={30}><Ico><path d="M7 19L19 6M13 6H19V12" stroke={B} strokeWidth="1.500" /><text x="0" y="0" transform="translate(4 14.500) rotate(-45)" fill="#444" stroke="none" fontSize="12.500" fontFamily={UI}>ab</text></Ico></Slot>
                <Slot $w={13}><Chev /></Slot>
              </Tools>
              <Tools>
                <Slot $w={32}><Ico w={18} h={18} sw={1.5}><path d="M0 1.500H18M0 6.500H12M0 11.500H18M0 16.500H12" /></Ico></Slot>
                <Slot $w={32}><Ico w={18} h={18} sw={1.5}><path d="M0 1.500H18M3 6.500H15M0 11.500H18M3 16.500H15" /></Ico></Slot>
                <Slot $w={32}><Ico w={18} h={18} sw={1.5}><path d="M0 1.500H18M6 6.500H18M0 11.500H18M6 16.500H18" /></Ico></Slot>
                <Slot $w={3}><Rule $h={29} /></Slot>
                <Slot $w={31}><Ico w={18} h={18} sw={1.5}><path d="M0 1.500H18M11 6.500H18M11 11.500H18M0 16.500H18" /><path d="M8.500 9H.8M4 5.500L.8 9L4 12.500" stroke={B} /></Ico></Slot>
                <Slot $w={34}><Ico w={18} h={18} sw={1.5}><path d="M0 1.500H18M11 6.500H18M11 11.500H18M0 16.500H18" /><path d="M0 9H7.500M4.500 5.500L8 9L4.500 12.500" stroke={B} /></Ico></Slot>
              </Tools>
            </Stack>
            <Slot $w={9}><Rule $h={78} /></Slot>
            <Stack $pt={14} $ml={7} $gap={10}>
              <Command $h={29}><i><Ico w={20} h={22}><text fill="#444" stroke="none" fontSize="13.500" fontFamily={UI}><tspan x="1" y="10">ab</tspan><tspan x="1" y="20.500">c</tspan></text><path d="M18 12Q19.500 17 10 17M13.500 13.500L10 17L13.500 20.500" stroke={B} strokeWidth="1.700" /></Ico></i>Wrap Text</Command>
              <Command $h={30} $gap={16}><i><Ico><rect x=".7" y=".7" width="18.600" height="18.600" /><path d="M.7 5H19.300M.7 15H19.300M10 .7V5M10 15V19.300" /><rect x="1.300" y="5.500" width="17.400" height="9" fill="#cfe5f7" stroke={B} /><path d="M4 10H16M6.500 7.500L4 10L6.500 12.500M13.500 7.500L16 10L13.500 12.500" stroke={B} strokeWidth="1.500" /></Ico></i><Wide>Merge &amp; Centre</Wide><Chev /></Command>
            </Stack>
          </GroupBody>
          <GroupFoot $pr={9}><span>Alignment</span><Launcher /></GroupFoot>
        </Group>

        <Group $w={200}>
          <GroupBody $pl={10}>
            <Stack $pt={14} $gap={10}>
              <Tools><Combo $w={179}>General<Chev /></Combo></Tools>
              <Tools>
                <Slot $w={30}><Ico><path d="M11 14.500H.7V3H19.300V8" strokeWidth="1.700" /><path d="M7 6Q4 6 4 9T7 12M13 6Q10 6 10 9" /><path d="M11 11Q11 9 15 9T19 11V18Q19 20 15 20T11 18ZM11 12Q15 14 19 12M11 15Q15 17 19 15" fill="#fff3e0" stroke="#e8750a" strokeWidth="1.500" /></Ico></Slot>
                <Slot $w={17}><Chev /></Slot>
                <Slot $w={38}><Ico w={18} h={18} sw={1.4}><ellipse cx="4.200" cy="4.800" rx="3.500" ry="4" /><ellipse cx="13.800" cy="13.200" rx="3.500" ry="4" /><path d="M14.500 .8L3.500 17.200" /></Ico></Slot>
                <Slot $w={27}><Ico w={9} h={16}><path d="M4 .3Q9 .3 9 6Q8.500 13 1.500 15.700L1 14.500Q5 12 5 8.500Q.2 8.500 .2 4.500Q.2 .3 4 .3Z" fill="#3b3b3b" stroke="none" /></Ico></Slot>
                <Slot $w={7}><Rule $h={29} /></Slot>
                <Slot $w={28}><Ico w={20} h={20}><path d="M10 5.500H.8M5 1.500L.8 5.500L5 9.500" stroke={B} strokeWidth="1.500" /><text fill="#444" stroke="none" fontSize="12" letterSpacing="-.2" fontFamily={UI}><tspan x="10" y="9.500">.0</tspan><tspan x="3" y="20">.00</tspan></text></Ico></Slot>
                <Slot $w={36}><Ico w={20} h={20}><path d="M0 15.500H10M6 11.500L10 15.500L6 19.500" stroke={B} strokeWidth="1.500" /><text fill="#444" stroke="none" fontSize="12" letterSpacing="-.2" fontFamily={UI}><tspan x="3" y="9.500">.00</tspan><tspan x="10" y="20">.0</tspan></text></Ico></Slot>
              </Tools>
            </Stack>
          </GroupBody>
          <GroupFoot $pr={9}><span>Number</span><Launcher /></GroupFoot>
        </Group>

        <Group $w={243}>
          <GroupBody $pl={13}>
            <BigCommand $w={84}>
              <Ico w={44} h={43} c="#555" sw={1.4}><Grid3 x={5} w={35} h={27} /><path d="M33 6V33" /><rect x="11" y="6" width="16" height="9" fill="#ff8f93" stroke="#e1322d" /><rect x="11" y="15" width="11" height="8" fill="#83bbec" stroke="#0f6cbd" /><rect x="11" y="23" width="19" height="10" fill="#ff8f93" stroke="#e1322d" /></Ico>
              <div>Conditional</div><div>Formatting<Chev /></div>
            </BigCommand>
            <BigCommand $w={84}>
              <Ico w={44} h={43} c="#555" sw={1.4}><Grid3 x={4} w={35} h={27} /><path d="M16 15H39V33H16ZM27.500 15V33M16 24H39" fill="#83bbec" stroke="#0f6cbd" /><Brush x={0} /></Ico>
              <div>Format as</div><div>Table<Chev /></div>
            </BigCommand>
            <BigCommand $w={46}>
              <Ico w={44} h={43} c="#555" sw={1.4}><Grid3 x={4} w={35} h={27} /><rect x="10" y="12" width="24" height="16" fill="#83bbec" stroke="#0f6cbd" /><Brush x={1} /></Ico>
              <div>Cell</div><div>Styles<Chev /></div>
            </BigCommand>
          </GroupBody>
          <GroupFoot $dy={1}><span>Styles</span></GroupFoot>
        </Group>

        <Group $w={180}>
          <GroupBody $pl={9}>
            <BigCommand $w={54} $low>
              <Ico w={44} h={43} c="#555" sw={1.4}><Grid3 x={4} w={35} h={27} /><path d="M19 15H41V24H19ZM30 15V24" fill="#83bbec" stroke="#0f6cbd" /><path d="M4 15V24" stroke="#fff" strokeWidth="3" /><path d="M18 19.500H2M10 12L2.500 19.500L10 27" stroke={B} /></Ico>
              <div>Insert</div><Chev />
            </BigCommand>
            <BigCommand $w={54} $low>
              <Ico w={44} h={43} c="#555" sw={1.4}><Grid3 x={4} w={35} h={27} /><path d="M4 15V24" stroke="#fff" strokeWidth="3" /><path d="M26 14H44V28H26Z" fill="#fff" stroke="none" /><path d="M9 15H26L29 19.500L26 24H9ZM20 15V24" fill="#83bbec" stroke="#0f6cbd" /><path d="M27 13L41 27M41 13L27 27" stroke="#e8413c" strokeWidth="1.800" /></Ico>
              <div>Delete</div><Chev />
            </BigCommand>
            <BigCommand $w={53}>
              <Ico w={44} h={43} c="#555" sw={1.4}><Grid3 x={4} w={35} h={27} /><rect x="13.500" y="15" width="17" height="9" fill="#83bbec" stroke="#0f6cbd" /><path d="M13 2H31M13 0V4.500M31 0V4.500" stroke={B} /></Ico>
              <div>Format</div><Chev />
            </BigCommand>
          </GroupBody>
          <GroupFoot $dy={1}><span>Cells</span></GroupFoot>
        </Group>

        <Group $w={257}>
          <GroupBody $pl={13}>
            <Stack $pt={3} $w={119}>
              <Command $gap={16}><i><Ico sw={1.5}><path d="M17 4V1H2L10 10L2 18.500H17.500V15" /></Ico></i>AutoSum<Chev /></Command>
              <Command $gap={6}><i><Ico><rect x=".7" y="1" width="18.600" height="17.500" fill="#fff" /><path d="M.7 3.500H19.300" strokeWidth="2" /><path d="M10 6V15.500M6 11.500L10 15.500L14 11.500" stroke={B} strokeWidth="1.500" /></Ico></i>Fill<Chev /></Command>
              <Command $gap={5}><i><Ico c="#a33fa8" sw={1.5}><path d="M12 .8L19 7L7.500 18.500L1 12Z" fill="#fff" /><path d="M6 7L13 13L7.500 18.500L1 12Z" fill="#d69be0" /></Ico></i>Clear<Chev /></Command>
            </Stack>
            <BigCommand $w={55}>
              <Ico w={44} h={43} sw={1.4}><path d="M5 18L10.500 4.500L16 18M6.800 13H14.200" stroke={B} strokeWidth="1.600" /><path d="M5.500 22.500H15L5 35.500H16M19 11.500H40V14.500L32 23.500V31H28V23.500L19.500 14.500Z" /></Ico>
              <div>Sort &amp;</div><div>Filter<Chev /></div>
            </BigCommand>
            <BigCommand $w={58}>
              <Ico w={44} h={43} sw={1.4}><circle cx="27.500" cy="15.500" r="13" fill="#fafafa" /><path d="M18.500 25L4.500 38.500" /></Ico>
              <div>Find &amp;</div><div>Select<Chev /></div>
            </BigCommand>
          </GroupBody>
          <GroupFoot $dy={1}><span>Editing</span></GroupFoot>
        </Group>

        <Group $w={77}>
          <GroupBody>
            <BigCommand $w={76}>
              <Ico w={44} h={43} c="#e2673b" sw={2}><rect x="5" y="3" width="34" height="34" /><rect x="9" y="7" width="11" height="11" /><rect x="24" y="7" width="11" height="11" /><rect x="9" y="22" width="11" height="11" /><rect x="24" y="22" width="11" height="11" /></Ico>
              <div>Add-ins</div>
            </BigCommand>
          </GroupBody>
          <GroupFoot $dy={1}><span>Add-ins</span></GroupFoot>
        </Group>
        <Slot $w={108}><Ico w={12} h={98}><path d="M.5 91L6 97L11.500 91" strokeWidth="1.500" /></Ico></Slot>
      </Ribbon>

      <FormulaRow>
        <Field $w={127} $mr={11}>P53<Chev w={12} /></Field>
        <Slot $w={3}><Dots><i /><i /><i /></Dots></Slot>
        <Slot $w={11} />
        <Field $w={92} $mr={5}>
          <Ico w={16} h={16} c="#b8b8b8" sw={1.4}><path d="M1 1L15 15M15 1L1 15" /></Ico>
          <Ico w={20} h={14} c="#b8b8b8" sw={1.5}><path d="M.7 8L6.500 13L19 .7" /></Ico>
          <Glyph $i $s={20} $f={'"Liberation Serif", serif'}>fx</Glyph>
        </Field>
        <Field $w={1650} $pr={3}><span /><Chev w={13} /></Field>
      </FormulaRow>

      <Work>
        <Sheet>
          <Board>
            <Side>
              <Slot $w={146}><svg width="64" height="82" viewBox="-18 -35 64 82"><Car /></svg></Slot>
              <LogoBox>
                <svg width="76" height="20" viewBox="0 0 76 20"><text x="0" y="15" fontSize="15.500" fontStyle="italic" fill="#fff" fontFamily={UI} fontWeight="400" textLength="76" lengthAdjust="spacingAndGlyphs">RevAutos</text></svg>
              </LogoBox>
              <NavItem $h={58} $pl={10} $gap={9} $dy={-0.5} $on><House /><span>DASHBOARD</span></NavItem>
              <NavItem $h={53} $pl={10} $gap={11} $dy={6.5}><BarsIcon /><span>ANALYSIS</span></NavItem>
              <NavItem $h={66} $pl={13} $gap={10.5} $dy={5}><DocIcon /><span>DATASET</span></NavItem>
              <Owner>
                <svg width="27" height="22" viewBox="0 0 27 22" fill="#0a7ebd"><ellipse cx="3.200" cy="2.500" rx="3.200" ry="2.500" /><path d="M.5 7H6V21.500H.5ZM9.500 7H14.700V9Q16.500 6.500 20 6.500Q26.500 6.500 26.500 13.500V21.500H21V14Q21 11 18.300 11Q15.200 11 15.200 14.500V21.500H9.500Z" /></svg>
                Ebenezer Denkyi
              </Owner>
            </Side>

            <Content>
              <TopLine>
                <Welcome>Welcome Back, Ebenezer!</Welcome>
                <Slicers><Slicer $w={70}>East</Slicer><Slicer $w={70}>Midwest</Slicer><Slicer $w={71}>South</Slicer><Slicer $w={71}>West</Slicer></Slicers>
              </TopLine>

              <CardRow $h={147} $pl={59}>
                <Card $w={288} $h={134} $mt={2} $r="24px / 20px">
                  <Line $h={23} $pl={8} $s={11.7}>Total COGS</Line>
                  <Line $h={23} $pl={6} $s={14.5} $w={900}>$100,110,460</Line>
                  <Spark id="a" w={288} h={86} box="299 405 288 86" base={485} hi="Aug, $13.05M" lo="May, $4.29M" hw={47} lw={45}
                    pts={[[322, 408], [343.500, 439.500], [364, 430.500], [386, 432.500], [406, 457], [427, 433.500], [449, 432.500], [469, 402.500], [491, 432.500], [512, 429.500], [533, 433.500], [554, 451.500]]} />
                </Card>
                <Card $w={285} $h={133.500} $ml={17} $mt={1} $r="24px / 18px">
                  <Line $h={23} $pl={8} $s={12}>Total Profit</Line>
                  <Line $h={21} $pl={8} $s={14.5} $w={900}>$18,144,540</Line>
                  <Spark id="b" w={285} h={86} box="604 402 285 86" base={481} hi="Aug, $2.36M" lo="May, $0.77M" hw={43} lw={45}
                    pts={[[638.500, 420.500], [658, 443.500], [677, 436.500], [697, 436.500], [716, 459], [735, 440], [754.500, 437.500], [773, 414.500], [793.500, 439.500], [812, 435.500], [832, 440], [852, 454.500]]} />
                </Card>
                <Card $w={268} $h={134} $ml={20} $r="24px / 18px">
                  <Line $h={24} $pl={8} $s={12}>Total Orders</Line>
                  <Line $h={20} $pl={12} $s={14.4} $w={900}>3500</Line>
                  <Spark id="c" w={268} h={86} box="909 401 268 86" base={482} hi="Aug, 447" lo="May, 152" hw={29} lw={31} red="#e8210b"
                    pts={[[945, 411], [964.500, 440.500], [983, 433.500], [1002, 432.500], [1019, 457], [1038.500, 437], [1058, 434], [1075, 408], [1094.500, 435.500], [1112, 432.500], [1132, 435.500], [1151, 453]]} />
                </Card>
                <Card $w={250} $h={130} $ml={12} $mt={2} $r="22px / 20px">
                  <Line $h={23} $pl={8} $s={11.9}>Customer Satisfaction Rating</Line>
                  <Line $h={20} $pl={34} $s={14.4} $w={900}>8.5</Line>
                  <svg width="250" height="82" viewBox="1189 402 250 82">
                    <path d="M1273.500 439A39.500 39.500 0 0 1 1349 422" fill="none" stroke="#000" strokeWidth="13" />
                    <path d="M1348.500 421A39.500 39.500 0 0 1 1352.500 439.500" fill="none" stroke="#000" strokeWidth="13.500" />
                    <path d="M1348.500 421A39.500 39.500 0 0 1 1352.500 440" fill="none" stroke="#bfbfbf" strokeWidth="10.500" />
                    <Tx x={1269.500} y={455} s={14.400} b={900}>0</Tx>
                    <Tx x={1353.500} y={457} s={14.400} b={900}>10</Tx>
                  </svg>
                </Card>
              </CardRow>

              <CardRow $h={264} $pl={49}>
                <Card $w={716} $h={248} $r="38px 38px 32px 18px / 28px 28px 28px 18px" $deep="-4px 0 5px 2px #909090, 4px 0 5px 1px #909090, 0 0 3px 1px rgba(0,0,0,.35), 0 2px 5px rgba(0,0,0,.2)">
                  <Split>
                    <PerfBox>
                      <Line $h={38} $s={15.2} $c $w={900} $pr={2}>Performance: Sales by SalesPerson</Line>
                      <svg width="390" height="160" viewBox="307 579 390 160">
                        <path d="M368.500 575V731" stroke="#d9d9d9" />
                        {people.map(([n, x, v, vx, nw], i) => (
                          <g key={n}>
                            <rect x="369" y={585 + i * 31.200} width={x - 369} height="11" fill={i ? '#bfbfbf' : '#000'} />
                            <Tx x={360} y={591 + i * 31.200} w={nw} s={9} a="end" b={400} c="#333">{n}</Tx>
                            <Tx x={vx} y={590.500 + i * 31.300} w={38.500} s={10.600} a="start">{v}</Tx>
                          </g>
                        ))}
                      </svg>
                    </PerfBox>
                    <PayBox>
                      <Line $h={34} $s={12} $c>Sales by the Payment Method</Line>
                      <svg width="280" height="170" viewBox="698 574 280 170">
                        <path d="M720 712.500H956" stroke="#d9d9d9" />
                        {pays.map(([n, y, v, nw], i) => (
                          <g key={n}>
                            <rect x={741 + i * 47} y={y} width="6" height={712.500 - y} fill="#a6a6a6" />
                            <circle cx={744 + i * 47} cy={y} r="9" />
                            <Tx x={744.500 + i * 47} y={y - 14} w={38.500} s={10.600}>{v}</Tx>
                            <Tx x={744 + i * 47} y={725.500} w={nw} s={8.800} b={900}>{n}</Tx>
                          </g>
                        ))}
                        <Tx x={744} y={736.500} w={32} s={8.800} b={900}>Transfer</Tx>
                      </svg>
                    </PayBox>
                  </Split>
                </Card>
                <Card $w={412} $h={247} $ml={23} $mt={4} $r="34px 30px 26px 34px / 30px 26px 26px 24px" $deep="0 0 4px 1.500px rgba(0,0,0,.4), 0 0 8px 4px rgba(0,0,0,.3)">
                  <Split>
                    <Line $h={64} $pl={145.5} $s={12} $ls={-0.1}>Car Brand: Sales vs COGS</Line>
                    <Legend><i /><span>Sales</span><i /><span>Cogs</span></Legend>
                  </Split>
                  <svg width="412" height="180" viewBox="1028 572 412 180">
                    {brands.map(([n, l, r, nw], i) => (
                      <g key={n}>
                        <rect x={l} y={570 + i * 23} width={1235 - l} height="9" />
                        <rect x="1276" y={570 + i * 23} width={r - 1276} height="9" fill="#bfbfbf" />
                        <Tx x={1255.700} y={574.800 + i * 23} w={nw} s={10.600} b={900}>{n}</Tx>
                      </g>
                    ))}
                    {['-$5M', '$5M', '$15M', '$25M', '$35M', '$45M'].map((t, i) => (
                      <Tx key={t} x={1055.500 + i * 68.900} y={713} w={i === 0 ? 20 : i === 1 ? 17 : 22} s={9.200} b={400} c="#333">{t}</Tx>
                    ))}
                  </svg>
                </Card>
              </CardRow>

              <CardRow $h={210} $pl={51}>
                <Card $w={346} $h={197} $mt={4} $r="28px 24px 26px 30px / 24px 20px 22px 24px" $deep="-1px 0 3px 1px rgba(0,0,0,.35), 0 0 7px 3px rgba(0,0,0,.33)">
                  <Line $h={41} $s={13.1} $c $pr={21} $pt={18}>Sales by State</Line>
                  <MapChart />
                </Card>
                <Card $w={770} $h={206} $ml={24} $r="36px / 34px" $deep="0 0 4px 1.500px rgba(0,0,0,.38), 0 0 8px 5px rgba(0,0,0,.33)">
                  <Line $h={35} $s={15.2} $c $w={900} $pt={4} $pr={2}>Monthly Sales Performance</Line>
                  <Monthly />
                </Card>
              </CardRow>
            </Content>
          </Board>
          <Selection />
        </Sheet>
        <VScroll>
          <svg width="10" height="8" viewBox="0 0 10 8"><path d="M5 0L10 8H0Z" fill="#606060" /></svg>
          <Thumb />
          <svg width="10" height="9" viewBox="0 0 10 9"><path d="M0 0H10L5 9Z" fill="#606060" /></svg>
        </VScroll>
      </Work>

      <TabBar>
        <TabStrip>
          <Slot $w={30}><Ico w={6} h={10}><path d="M5 0V8L0 4Z" fill="#bcbcbc" stroke="none" /></Ico></Slot>
          <Slot $w={28}><Ico w={6} h={10}><path d="M0 0V8L5 4Z" fill="#bcbcbc" stroke="none" /></Ico></Slot>
          <Tab $w={30} $bar />
          <Tab $w={87}>Analysis</Tab>
          <Tab $w={111} $on>Dashboard</Tab>
          <Tab $w={91} $bar>RevData</Tab>
          <Tab $w={102} $bar>DirtyData</Tab>
          <Slot $w={88}><Ico w={20} h={20} c="#777"><circle cx="10" cy="9.500" r="9.300" /><path d="M10 4V15M4.500 9.500H15.500" strokeWidth="1.400" stroke="#555" /></Ico></Slot>
        </TabStrip>
        <Slot $w={588} />
        <Dots $mt={7}><i /><i /><i /></Dots>
        <HScroll>
          <svg width="9" height="10" viewBox="0 0 9 10"><path d="M8 0V10L0 5Z" fill="#606060" /></svg>
          <i />
          <svg width="9" height="10" viewBox="0 0 9 10"><path d="M1 0V10L9 5Z" fill="#606060" /></svg>
        </HScroll>
      </TabBar>
      <Status>
        <Slot $w={36}>Ready</Slot>
        <Slot $w={24} />
        <Ico w={18} h={18}><circle cx="8" cy="3" r="2.300" /><path d="M1 4.500L6 7.500V11L3 17M15 4.500L10 7.500V10L13 17M6 7.500H10" /><path d="M10 11L17 17.500M17 11L10 17.500" /></Ico>
        <Slot $w={147}>Accessibility: Investigate</Slot>
        <Slot $w={1309} />
        <ViewBtn $on $w={50}><Ico w={17} h={17} sw={1.5}><path d="M1 1H16V16H1ZM1 6H16M1 11H16M6 1V16M11 1V16" /></Ico></ViewBtn>
        <ViewBtn $w={50}><Ico w={17} h={17} sw={1.5}><path d="M1 1H16V16H1ZM4.500 4H12.500V13H4.500ZM6 6.500H11M6 8.500H11M6 10.500H11" /></Ico></ViewBtn>
        <ViewBtn $w={50}><Ico w={17} h={17} sw={1.4}><path d="M1 1H16V16H1ZM6 1V8.500H11V1M1 8.500H6" /></Ico></ViewBtn>
        <Slot $w={24}><Ico w={11} h={10}><path d="M0 5H11" strokeWidth="1.500" /></Ico></Slot>
        <Ico w={126} h={14} c="#666"><path d="M0 7H126M64 3.500V10.500" /><rect x="40" y="0" width="5" height="14" fill="#555" stroke="none" /></Ico>
        <Slot $w={20}><Ico w={11} h={11}><path d="M0 5.500H11M5.500 0V11" strokeWidth="1.500" /></Ico></Slot>
        <Slot $w={46}>70%</Slot>
      </Status>
    </Shell>
  );
}

const Wide = styled.span`
  letter-spacing: 0.1px;
`;
